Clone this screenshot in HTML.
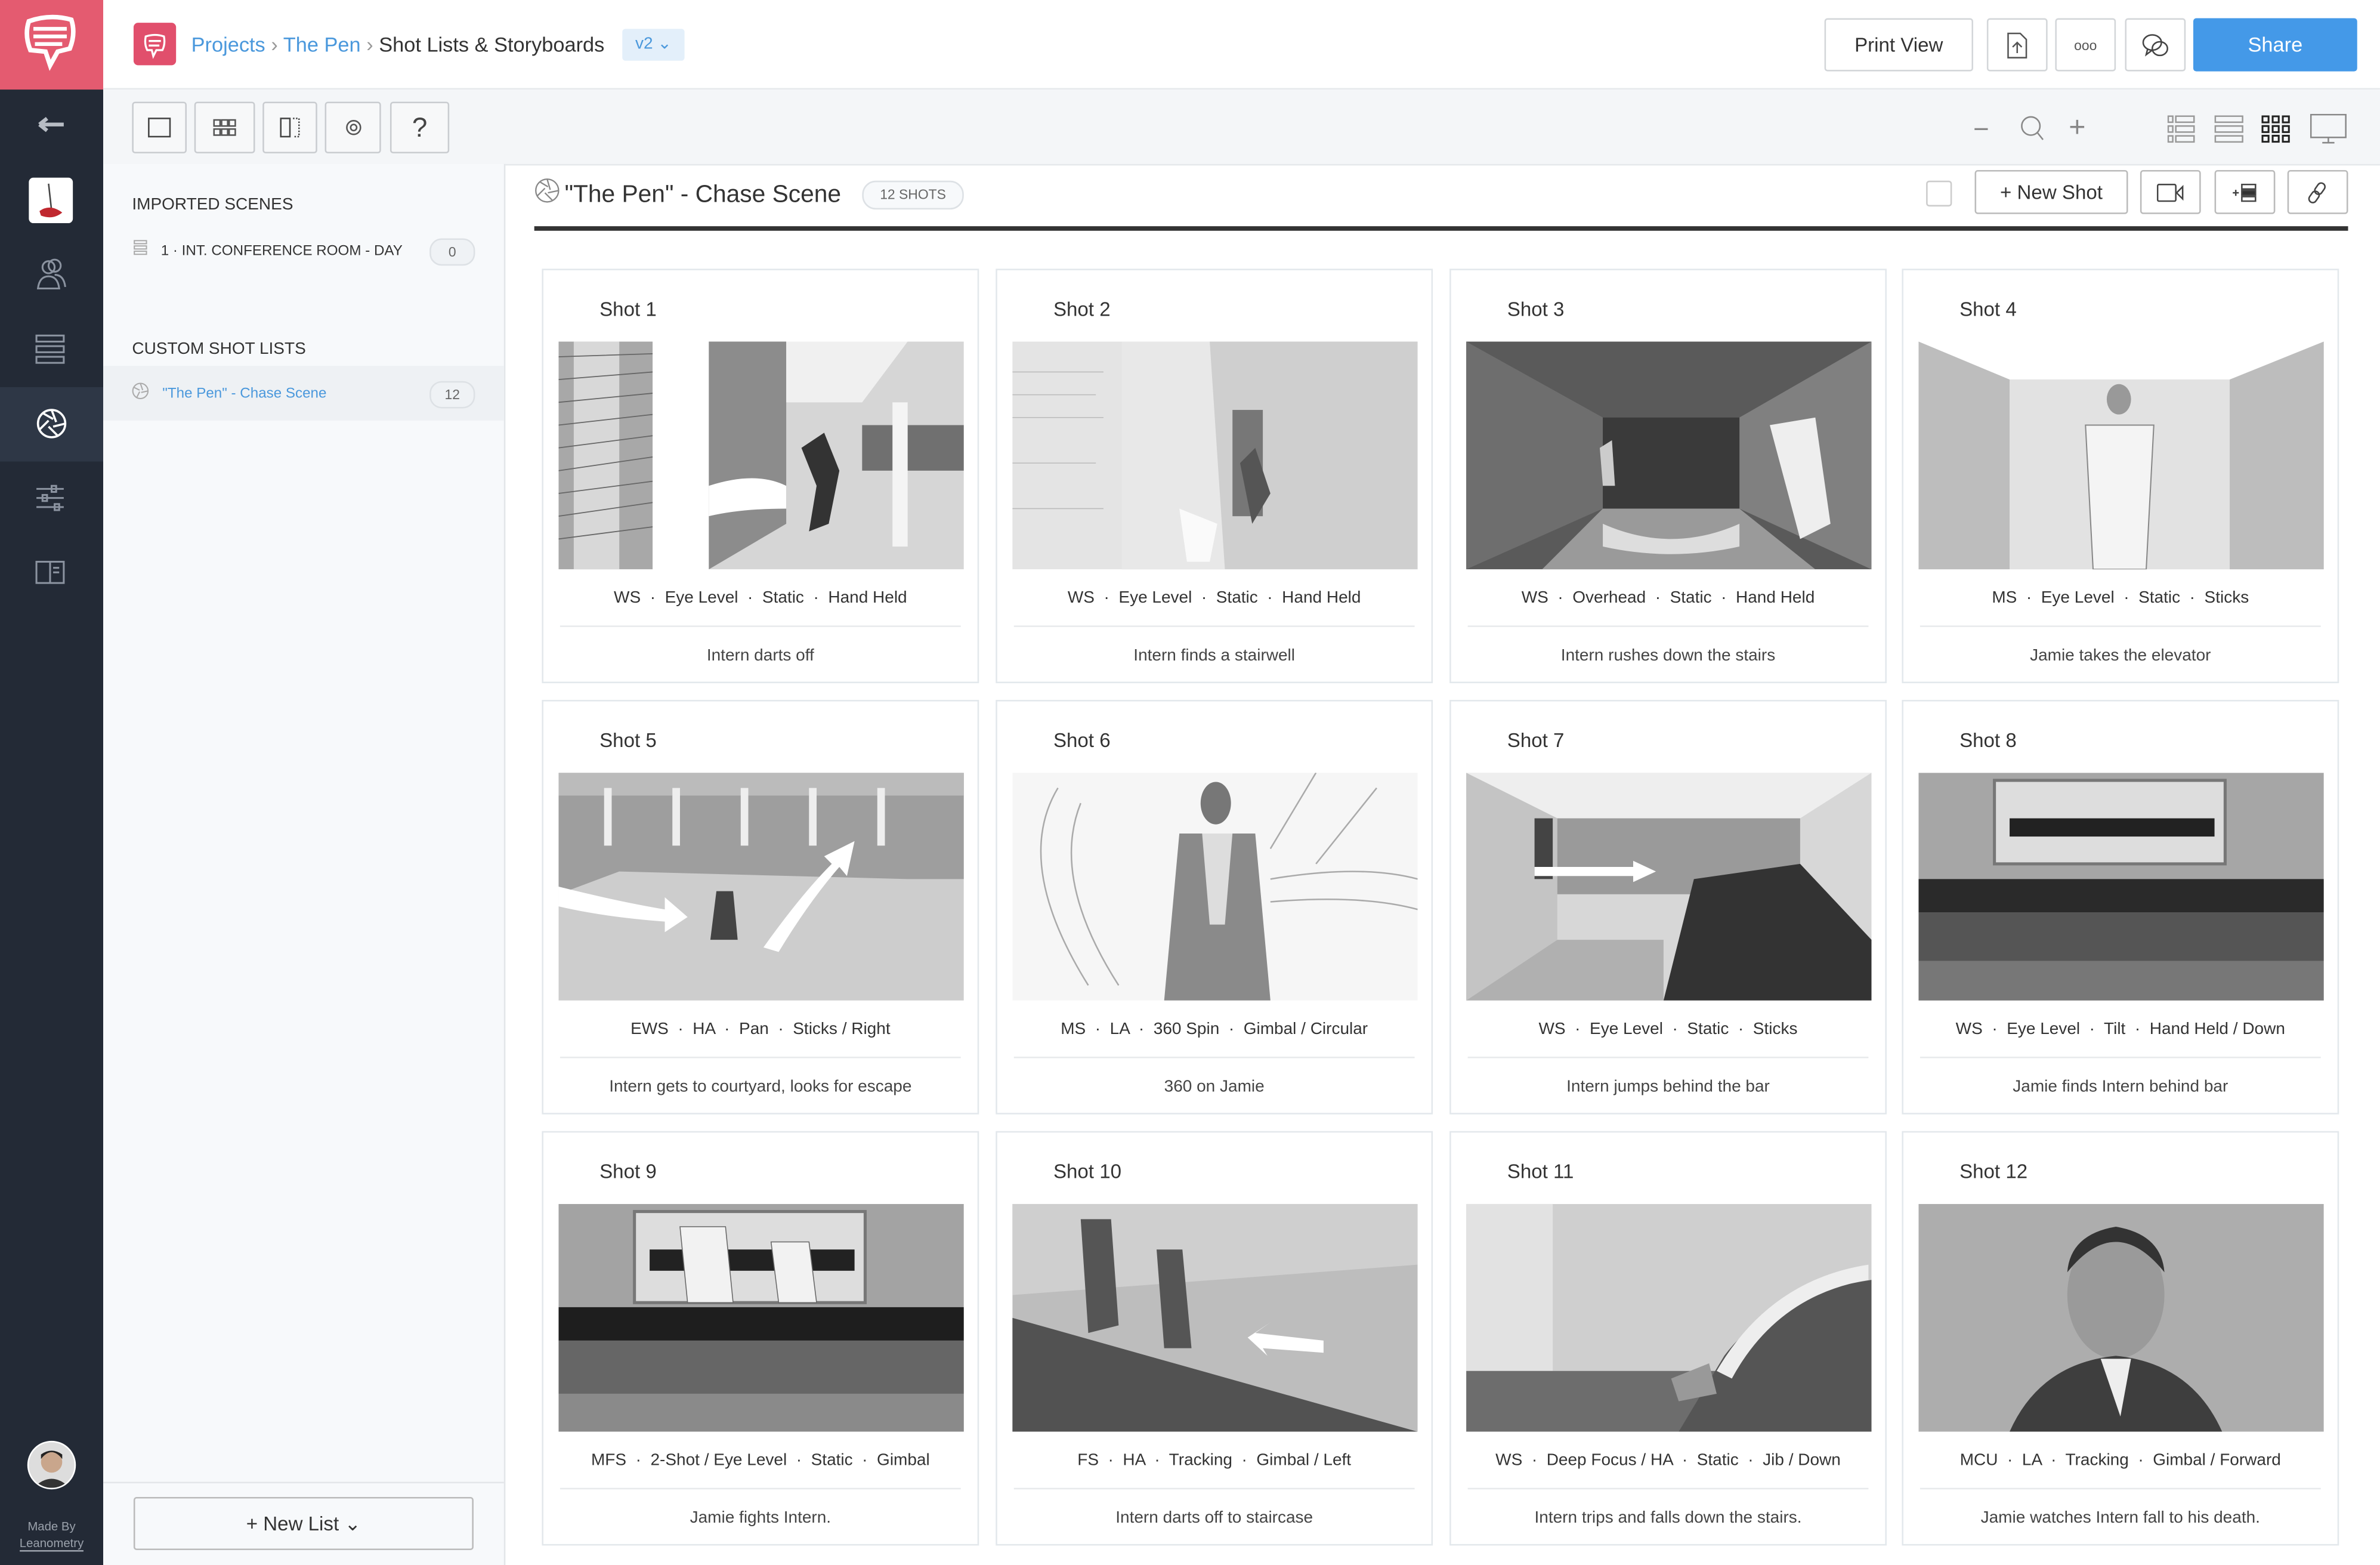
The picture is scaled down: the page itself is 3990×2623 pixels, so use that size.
<!DOCTYPE html>
<html><head><meta charset="utf-8"><style>
html,body{margin:0;padding:0;width:3990px;height:2623px;overflow:hidden;background:#fff}
#w{position:absolute;left:0;top:0;width:1568px;height:1031px;transform:scale(2.5446);transform-origin:0 0;font-family:"Liberation Sans",sans-serif;color:#333}
.a{position:absolute}
.sb{left:0;top:0;width:68px;height:1031px;background:#232a36}
.logo{left:0;top:0;width:68px;height:59px;background:#e45b70}
.hdr{left:68px;top:0;width:1500px;height:58px;background:#fff;border-bottom:1px solid #e6e9ec}
.tb{left:68px;top:59px;width:1500px;height:49px;background:#f4f6f8;border-bottom:1px solid #e6e9ec}
.lp{left:68px;top:108px;width:264px;height:923px;background:#f7f9fb;border-right:1px solid #e3e6e9}
.btn{position:absolute;background:#fff;border:1px solid #d3d6d9;border-radius:2px;box-sizing:border-box;display:flex;align-items:center;justify-content:center}
.tbtn{position:absolute;top:67px;height:34px;background:#f7f8f9;border:1px solid #c9ccd0;border-radius:2px;box-sizing:border-box;display:flex;align-items:center;justify-content:center}
.card{position:absolute;width:288px;height:273px;background:#fff;border:1px solid #e3e8ec;box-sizing:border-box}
.card .t{position:absolute;left:37px;top:18px;font-size:13px;color:#333}
.card svg{position:absolute;left:10px;top:47px}
.card .m{position:absolute;left:0;width:100%;top:210px;text-align:center;font-size:11px;color:#333;white-space:nowrap}
.card .l{position:absolute;left:11px;right:11px;top:234px;border-top:1px solid #e8eaec}
.card .c{position:absolute;left:0;width:100%;top:248px;text-align:center;font-size:11px;color:#444;white-space:nowrap}
.pill{position:absolute;border:1px solid #dde1e5;border-radius:9px;background:#eff2f5;font-size:9px;color:#666;text-align:center}
</style></head><body><div id="w">
<div class="a sb"></div>
<div class="a logo"><svg width="68" height="59"><path d="M19 14 Q33 9 47 13 Q50 22 46 32 L38 34 L33 43 L30 34 L20 33 Q16 23 19 14Z" fill="none" stroke="#fff" stroke-width="3"/><path d="M22 19 H44 M22 24 H44 M23 29 H41" stroke="#fff" stroke-width="2.5"/></svg></div>
<svg class="a" style="left:24px;top:76px" width="20" height="12"><path d="M2 6 H18 M2 6 L7 2 M2 6 L7 10" stroke="#b7bcc4" stroke-width="2.5" fill="none"/></svg>
<div class="a" style="left:19px;top:117px;width:29px;height:30px;background:#fff;border-radius:3px"><svg width="29" height="30"><path d="M13 4 L15 22" stroke="#444"/><path d="M7 22 Q14 17 22 23 Q16 28 8 25Z" fill="#c0282f"/></svg></div>
<svg class="a" style="left:24px;top:168px" width="20" height="24" fill="none" stroke="#8b93a0" stroke-width="1.2"><circle cx="8" cy="8" r="4"/><circle cx="12" cy="7" r="4"/><path d="M1 22 Q2 14 8 14 Q14 14 15 22Z M12 13 Q18 13 19 21"/></svg>
<svg class="a" style="left:23px;top:220px" width="20" height="20" fill="none" stroke="#8b93a0" stroke-width="1.2"><rect x="1" y="1" width="18" height="4"/><rect x="1" y="8" width="18" height="4"/><rect x="1" y="15" width="18" height="4"/></svg>
<div class="a" style="left:0;top:255px;width:68px;height:49px;background:#2e3746"></div>
<svg class="a" style="left:23px;top:268px" width="22" height="22" fill="none" stroke="#fff" stroke-width="1.4"><circle cx="11" cy="11" r="9"/><path d="M11 2 L14 10 M20 11 L12 13 M15 19 L9 13 M3 15 L9 9 M5 4 L12 8"/></svg>
<svg class="a" style="left:23px;top:318px" width="20" height="20" fill="none" stroke="#8b93a0" stroke-width="1.2"><path d="M1 4 H19 M1 10 H19 M1 16 H19"/><rect x="11" y="2" width="3" height="4"/><rect x="5" y="8" width="3" height="4"/><rect x="13" y="14" width="3" height="4"/></svg>
<svg class="a" style="left:23px;top:368px" width="20" height="18" fill="none" stroke="#8b93a0" stroke-width="1.2"><rect x="1" y="2" width="18" height="14"/><path d="M10 2 V16 M12 6 H16 M12 9 H16"/></svg>
<div class="a" style="left:18px;top:949px;width:30px;height:30px;border-radius:50%;background:#ddd;border:1px solid #fff;overflow:hidden"><svg width="30" height="30"><circle cx="15" cy="13" r="7" fill="#c9a68c"/><path d="M8 11 Q15 2 22 11 L22 8 Q15 3 8 8Z" fill="#222"/><path d="M3 30 Q15 18 27 30Z" fill="#333"/></svg></div>
<div class="a" style="left:0;top:1000px;width:68px;text-align:center;font-size:8px;color:#9aa1ab;line-height:11px">Made By<br><span style="border-bottom:1px solid #9aa1ab">Leanometry</span></div>

<div class="a hdr"></div>
<div class="a" style="left:88px;top:15px;width:28px;height:28px;background:#e14f6c;border-radius:3px"><svg width="28" height="28" fill="none" stroke="#fff" stroke-width="1.3"><path d="M8 9 Q14 7 20 9 Q21 14 19 18 L15 18 L13 22 L12 18 L9 18 Q7 14 8 9Z M10 12 H18 M10 15 H17"/></svg></div>
<div class="a" style="left:126px;top:22px;font-size:13.5px;white-space:nowrap"><span style="color:#4a98dc">Projects</span> <span style="color:#999">&#x203A;</span> <span style="color:#4a98dc">The Pen</span> <span style="color:#999">&#x203A;</span> <span style="color:#333">Shot Lists &amp; Storyboards</span></div>
<div class="a" style="left:410px;top:19px;width:41px;height:21px;background:#e3effa;border-radius:2px;font-size:11px;color:#4a98dc;line-height:21px;text-align:center">v2 &#x2304;</div>
<div class="btn" style="left:1202px;top:12px;width:98px;height:35px;font-size:13px">Print View</div>
<div class="btn" style="left:1309px;top:12px;width:40px;height:35px"><svg width="14" height="18" fill="none" stroke="#555"><path d="M1 1 H9 L13 5 V17 H1Z M7 14 V7 M4 10 L7 7 L10 10"/></svg></div>
<div class="btn" style="left:1354px;top:12px;width:40px;height:35px;font-size:9px;color:#555">ooo</div>
<div class="btn" style="left:1400px;top:12px;width:40px;height:35px"><svg width="18" height="18" fill="none" stroke="#444"><ellipse cx="7" cy="7" rx="6" ry="5"/><path d="M4 11 L3 15 L7 12"/><ellipse cx="12" cy="11" rx="5" ry="4.5"/></svg></div>
<div class="a" style="left:1445px;top:12px;width:108px;height:35px;background:#4499e8;border-radius:2px;color:#fff;font-size:13.5px;line-height:35px;text-align:center">Share</div>

<div class="a tb"></div>
<div class="tbtn" style="left:87px;width:36px"><svg width="16" height="14" fill="none" stroke="#444"><rect x="1" y="1" width="14" height="12"/></svg></div>
<div class="tbtn" style="left:128px;width:40px"><svg width="16" height="12" fill="none" stroke="#555"><rect x="1" y="1" width="4" height="4"/><rect x="6" y="1" width="4" height="4"/><rect x="11" y="1" width="4" height="4"/><rect x="1" y="7" width="4" height="4"/><rect x="6" y="7" width="4" height="4"/><rect x="11" y="7" width="4" height="4"/></svg></div>
<div class="tbtn" style="left:173px;width:36px"><svg width="14" height="14" fill="none" stroke="#444"><rect x="1" y="1" width="6" height="12"/><path d="M9 1 H13 V13 H9" stroke-dasharray="1 1"/></svg></div>
<div class="tbtn" style="left:214px;width:37px"><svg width="14" height="14" fill="none" stroke="#555"><circle cx="7" cy="7" r="4.5"/><circle cx="7" cy="7" r="2"/></svg></div>
<div class="tbtn" style="left:257px;width:39px;font-size:18px;color:#444">?</div>
<div class="a" style="left:1300px;top:75px;font-size:18px;color:#888">&#x2212;</div>
<svg class="a" style="left:1330px;top:76px" width="18" height="18" fill="none" stroke="#888"><circle cx="8" cy="7" r="6"/><path d="M12 11 L16 16"/></svg>
<div class="a" style="left:1363px;top:74px;font-size:19px;color:#888">+</div>
<svg class="a" style="left:1428px;top:76px" width="18" height="18" fill="none" stroke="#999"><rect x="0.5" y="0.5" width="3" height="4"/><rect x="5.5" y="0.5" width="12" height="4"/><rect x="0.5" y="7" width="3" height="4"/><rect x="5.5" y="7" width="12" height="4"/><rect x="0.5" y="13.5" width="3" height="4"/><rect x="5.5" y="13.5" width="12" height="4"/></svg>
<svg class="a" style="left:1459px;top:76px" width="19" height="18" fill="none" stroke="#999"><rect x="0.5" y="0.5" width="18" height="4"/><rect x="0.5" y="7" width="18" height="4"/><rect x="0.5" y="13.5" width="18" height="4"/></svg>
<svg class="a" style="left:1490px;top:76px" width="19" height="18" fill="none" stroke="#222" stroke-width="1.2"><rect x="0.6" y="0.6" width="4" height="4"/><rect x="7.3" y="0.6" width="4" height="4"/><rect x="14" y="0.6" width="4" height="4"/><rect x="0.6" y="7" width="4" height="4"/><rect x="7.3" y="7" width="4" height="4"/><rect x="14" y="7" width="4" height="4"/><rect x="0.6" y="13.4" width="4" height="4"/><rect x="7.3" y="13.4" width="4" height="4"/><rect x="14" y="13.4" width="4" height="4"/></svg>
<svg class="a" style="left:1522px;top:75px" width="24" height="20" fill="none" stroke="#888"><rect x="0.5" y="0.5" width="23" height="15"/><path d="M8 19 H16 M12 16 V19"/></svg>

<div class="a lp"></div>
<div class="a" style="left:87px;top:129px;font-size:11px;color:#333">IMPORTED SCENES</div>
<svg class="a" style="left:88px;top:158px" width="9" height="10" fill="none" stroke="#aaa" stroke-width=".8"><rect x="0.5" y="0.5" width="8" height="2"/><rect x="0.5" y="4" width="8" height="2"/><rect x="0.5" y="7.5" width="8" height="2"/></svg>
<div class="a" style="left:106px;top:160px;font-size:9.5px;color:#333">1 · INT. CONFERENCE ROOM - DAY</div>
<div class="pill" style="left:283px;top:157px;width:28px;height:16px;line-height:16px;border-radius:8px">0</div>
<div class="a" style="left:87px;top:224px;font-size:11px;color:#333">CUSTOM SHOT LISTS</div>
<div class="a" style="left:68px;top:241px;width:264px;height:36px;background:#eef1f4"></div>
<svg class="a" style="left:87px;top:252px" width="11" height="11" fill="none" stroke="#aaa" stroke-width=".8"><circle cx="5.5" cy="5.5" r="5"/><path d="M5.5 .5 L7 5 M10.5 5.5 L6 6.5 M3 10 L5 6 M1 3 L5 5"/></svg>
<div class="a" style="left:107px;top:254px;font-size:9.5px;color:#4a98dc">"The Pen" - Chase Scene</div>
<div class="pill" style="left:283px;top:251px;width:28px;height:16px;line-height:16px;border-radius:8px">12</div>
<div class="a" style="left:68px;top:976px;width:264px;border-top:1px solid #e3e6e9"></div>
<div class="btn" style="left:88px;top:986px;width:224px;height:35px;font-size:13px;background:#f7f9fb;border-color:#bbb">+ New List &#x2304;</div>

<svg class="a" style="left:352px;top:117px" width="17" height="17" fill="none" stroke="#888" stroke-width=".9"><circle cx="8.5" cy="8.5" r="7.5"/><path d="M8.5 1 L10.5 8 M16 8.5 L9 10 M12 15 L7 10 M2 12 L7 7 M4 3 L9 6"/></svg>
<div class="a" style="left:372px;top:120px;font-size:16px;color:#333">"The Pen" - Chase Scene</div>
<div class="pill" style="left:568px;top:119px;width:65px;height:17px;line-height:17px;background:#f7f9fb">12 SHOTS</div>
<div class="a" style="left:1269px;top:119px;width:17px;height:17px;border:1px solid #ccc;border-radius:2px;box-sizing:border-box"></div>
<div class="btn" style="left:1301px;top:112px;width:101px;height:29px;font-size:13px;border-color:#bbb">+&nbsp;New Shot</div>
<div class="btn" style="left:1410px;top:112px;width:40px;height:29px;border-color:#bbb"><svg width="18" height="12" fill="none" stroke="#444"><rect x=".5" y=".5" width="12" height="11" rx="1"/><path d="M13 6 L17 2 V10Z"/></svg></div>
<div class="btn" style="left:1459px;top:112px;width:40px;height:29px;border-color:#bbb"><svg width="16" height="12" fill="none" stroke="#444"><path d="M0 6 H4 M2 4 V8"/><rect x="6" y=".5" width="9" height="3"/><rect x="6" y="4.5" width="9" height="3" fill="#333"/><rect x="6" y="8.5" width="9" height="3"/></svg></div>
<div class="btn" style="left:1507px;top:112px;width:40px;height:29px;border-color:#bbb"><svg width="14" height="16" fill="none" stroke="#444"><rect x="6" y="1" width="5" height="8" rx="2.5" transform="rotate(35 8 5)"/><rect x="2" y="7" width="5" height="8" rx="2.5" transform="rotate(35 5 11)"/></svg></div>
<div class="a" style="left:352px;top:149px;width:1195px;height:3px;background:#333"></div>

<!-- Row 1 -->
<div class="card" style="left:357px;top:177px"><div class="t">Shot 1</div>
<svg width="267" height="150"><rect width="62" height="150" fill="#a8a8a8"/><rect x="10" width="30" height="150" fill="#d8d8d8"/><g stroke="#666" stroke-width=".7"><path d="M0 10 L62 8 M0 25 L62 20 M0 40 L62 34 M0 55 L62 48 M0 70 L62 62 M0 85 L62 76 M0 100 L62 92 M0 115 L62 106 M0 130 L62 122"/></g><rect x="62" width="37" height="150" fill="#fff"/><rect x="99" width="168" height="150" fill="#d6d6d6"/><path d="M99 0 H150 V120 L99 150Z" fill="#8c8c8c"/><path d="M150 0 H230 L200 40 L150 40Z" fill="#f0f0f0"/><rect x="200" y="55" width="67" height="30" fill="#707070"/><path d="M99 95 Q130 85 150 95 L150 110 Q120 110 99 115Z" fill="#fff"/><path d="M160 70 L175 60 L185 85 L178 120 L165 125 L170 95Z" fill="#333"/><rect x="220" y="40" width="10" height="95" fill="#f4f4f4"/></svg>
<div class="m">WS &nbsp;·&nbsp; Eye Level &nbsp;·&nbsp; Static &nbsp;·&nbsp; Hand Held</div><div class="l"></div><div class="c">Intern darts off</div></div>

<div class="card" style="left:656px;top:177px"><div class="t">Shot 2</div>
<svg width="267" height="150"><rect width="267" height="150" fill="#e4e4e4"/><path d="M72 0 H267 V150 H72Z" fill="#cfcfcf"/><path d="M72 0 L130 0 L140 150 L72 150Z" fill="#e8e8e8"/><rect x="145" y="45" width="20" height="70" fill="#777"/><path d="M150 80 L160 70 L170 100 L158 120Z" fill="#555"/><path d="M110 110 L135 120 L130 145 L115 145Z" fill="#fafafa"/><g stroke="#bbb" stroke-width=".6"><path d="M0 20 H60 M0 35 H55 M0 50 H60 M0 80 H55 M0 110 H60"/></g></svg>
<div class="m">WS &nbsp;·&nbsp; Eye Level &nbsp;·&nbsp; Static &nbsp;·&nbsp; Hand Held</div><div class="l"></div><div class="c">Intern finds a stairwell</div></div>

<div class="card" style="left:955px;top:177px"><div class="t">Shot 3</div>
<svg width="267" height="150"><rect width="267" height="150" fill="#5a5a5a"/><path d="M0 0 L90 50 L90 110 L0 150Z" fill="#6e6e6e"/><path d="M267 0 L180 50 L180 110 L267 150Z" fill="#808080"/><rect x="90" y="50" width="90" height="60" fill="#3a3a3a"/><path d="M50 150 L90 110 L180 110 L230 150Z" fill="#9a9a9a"/><path d="M200 55 L230 50 L240 120 L220 130Z" fill="#eee"/><path d="M90 120 Q135 140 180 120 L180 135 Q135 145 90 135Z" fill="#ddd"/><path d="M88 70 L96 65 L98 95 L90 95Z" fill="#ccc"/></svg>
<div class="m">WS &nbsp;·&nbsp; Overhead &nbsp;·&nbsp; Static &nbsp;·&nbsp; Hand Held</div><div class="l"></div><div class="c">Intern rushes down the stairs</div></div>

<div class="card" style="left:1253px;top:177px"><div class="t">Shot 4</div>
<svg width="267" height="150"><rect width="267" height="150" fill="#d3d3d3"/><path d="M0 0 H267 L205 25 H60Z" fill="#fff"/><path d="M0 0 L60 25 V150 H0Z M267 0 L205 25 V150 H267Z" fill="#bdbdbd"/><rect x="60" y="25" width="145" height="125" fill="#e2e2e2"/><ellipse cx="132" cy="38" rx="8" ry="10" fill="#999"/><path d="M110 55 L155 55 L150 150 L115 150Z" fill="#f4f4f4" stroke="#888" stroke-width=".8"/></svg>
<div class="m">MS &nbsp;·&nbsp; Eye Level &nbsp;·&nbsp; Static &nbsp;·&nbsp; Sticks</div><div class="l"></div><div class="c">Jamie takes the elevator</div></div>

<!-- Row 2 -->
<div class="card" style="left:357px;top:461px"><div class="t">Shot 5</div>
<svg width="267" height="150"><rect width="267" height="150" fill="#cdcdcd"/><path d="M0 0 H267 V70 H230 L40 65 L0 80Z" fill="#9e9e9e"/><path d="M0 0 H267 V15 H0Z" fill="#bbb"/><g fill="#eee"><rect x="30" y="10" width="5" height="38"/><rect x="75" y="10" width="5" height="38"/><rect x="120" y="10" width="5" height="38"/><rect x="165" y="10" width="5" height="38"/><rect x="210" y="10" width="5" height="38"/></g><path d="M0 75 Q40 85 70 90 L70 82 L85 95 L70 105 L70 98 Q30 95 0 88Z" fill="#fff"/><path d="M135 115 Q160 80 180 60 L175 55 L195 45 L190 68 L185 62 Q165 85 145 118Z" fill="#fff"/><path d="M104 78 L115 78 L118 110 L100 110Z" fill="#444"/></svg>
<div class="m">EWS &nbsp;·&nbsp; HA &nbsp;·&nbsp; Pan &nbsp;·&nbsp; Sticks / Right</div><div class="l"></div><div class="c">Intern gets to courtyard, looks for escape</div></div>

<div class="card" style="left:656px;top:461px"><div class="t">Shot 6</div>
<svg width="267" height="150"><rect width="267" height="150" fill="#f6f6f6"/><g fill="none" stroke="#aaa"><path d="M30 10 Q0 60 50 140 M45 20 Q25 70 70 140 M170 70 Q230 60 267 70 M170 85 Q230 80 267 90 M200 0 L170 50 M240 10 L200 60"/></g><path d="M110 40 L160 40 L170 150 L100 150Z" fill="#8a8a8a"/><ellipse cx="134" cy="20" rx="10" ry="14" fill="#777"/><path d="M125 40 L145 40 L140 100 L130 100Z" fill="#ddd"/></svg>
<div class="m">MS &nbsp;·&nbsp; LA &nbsp;·&nbsp; 360 Spin &nbsp;·&nbsp; Gimbal / Circular</div><div class="l"></div><div class="c">360 on Jamie</div></div>

<div class="card" style="left:955px;top:461px"><div class="t">Shot 7</div>
<svg width="267" height="150"><rect width="267" height="150" fill="#d7d7d7"/><path d="M0 0 H267 L220 30 H60Z" fill="#eee"/><path d="M0 0 L60 30 L60 110 L0 150Z" fill="#c4c4c4"/><rect x="60" y="30" width="160" height="50" fill="#9a9a9a"/><rect x="45" y="30" width="12" height="40" fill="#444"/><path d="M130 150 L150 70 L220 60 L267 110 L267 150Z" fill="#333"/><path d="M0 150 L60 110 L130 110 L130 150Z" fill="#b0b0b0"/><path d="M45 62 H110 V58 L125 65 L110 72 V68 H45Z" fill="#fff"/></svg>
<div class="m">WS &nbsp;·&nbsp; Eye Level &nbsp;·&nbsp; Static &nbsp;·&nbsp; Sticks</div><div class="l"></div><div class="c">Intern jumps behind the bar</div></div>

<div class="card" style="left:1253px;top:461px"><div class="t">Shot 8</div>
<svg width="267" height="150"><rect width="267" height="150" fill="#a6a6a6"/><rect x="50" y="5" width="152" height="55" fill="#ddd" stroke="#777" stroke-width="2"/><rect x="60" y="30" width="135" height="12" fill="#222"/><rect x="0" y="70" width="267" height="22" fill="#2a2a2a"/><rect x="0" y="92" width="267" height="32" fill="#555"/><rect x="0" y="124" width="267" height="26" fill="#777"/></svg>
<div class="m">WS &nbsp;·&nbsp; Eye Level &nbsp;·&nbsp; Tilt &nbsp;·&nbsp; Hand Held / Down</div><div class="l"></div><div class="c">Jamie finds Intern behind bar</div></div>

<!-- Row 3 -->
<div class="card" style="left:357px;top:745px"><div class="t">Shot 9</div>
<svg width="267" height="150"><rect width="267" height="150" fill="#a3a3a3"/><rect x="50" y="5" width="152" height="60" fill="#ddd" stroke="#777" stroke-width="2"/><rect x="60" y="30" width="135" height="14" fill="#222"/><path d="M80 15 L110 15 L115 65 L85 65Z M140 25 L165 25 L170 65 L145 65Z" fill="#f2f2f2" stroke="#666" stroke-width=".6"/><rect x="0" y="68" width="267" height="22" fill="#1e1e1e"/><rect x="0" y="90" width="267" height="35" fill="#666"/><rect x="0" y="125" width="267" height="25" fill="#8a8a8a"/></svg>
<div class="m">MFS &nbsp;·&nbsp; 2-Shot / Eye Level &nbsp;·&nbsp; Static &nbsp;·&nbsp; Gimbal</div><div class="l"></div><div class="c">Jamie fights Intern.</div></div>

<div class="card" style="left:656px;top:745px"><div class="t">Shot 10</div>
<svg width="267" height="150"><rect width="267" height="150" fill="#bdbdbd"/><path d="M0 0 H267 V40 L0 60Z" fill="#cfcfcf"/><path d="M0 75 L267 150 H0Z" fill="#525252"/><path d="M45 10 L65 10 L70 80 L50 85Z M95 30 L112 30 L118 95 L100 95Z" fill="#555"/><path d="M160 85 L205 90 L205 98 L165 95 L168 100 L155 88 L170 78Z" fill="#fff"/></svg>
<div class="m">FS &nbsp;·&nbsp; HA &nbsp;·&nbsp; Tracking &nbsp;·&nbsp; Gimbal / Left</div><div class="l"></div><div class="c">Intern darts off to staircase</div></div>

<div class="card" style="left:955px;top:745px"><div class="t">Shot 11</div>
<svg width="267" height="150"><rect width="267" height="150" fill="#cfcfcf"/><rect width="57" height="110" fill="#e2e2e2"/><rect x="0" y="110" width="267" height="40" fill="#6d6d6d"/><path d="M140 150 L170 100 Q200 60 267 50 V150Z" fill="#555"/><path d="M165 110 Q200 50 265 40 L265 50 Q205 60 175 115Z" fill="#eee"/><path d="M135 115 L160 105 L165 125 L140 130Z" fill="#999"/></svg>
<div class="m">WS &nbsp;·&nbsp; Deep Focus / HA &nbsp;·&nbsp; Static &nbsp;·&nbsp; Jib / Down</div><div class="l"></div><div class="c">Intern trips and falls down the stairs.</div></div>

<div class="card" style="left:1253px;top:745px"><div class="t">Shot 12</div>
<svg width="267" height="150"><rect width="267" height="150" fill="#adadad"/><ellipse cx="130" cy="60" rx="32" ry="42" fill="#9a9a9a"/><path d="M98 45 Q130 5 162 45 Q160 20 130 15 Q100 20 98 45Z" fill="#333"/><path d="M60 150 Q80 105 130 100 Q180 105 200 150Z" fill="#3e3e3e"/><path d="M120 102 L140 102 L133 140Z" fill="#eee"/></svg>
<div class="m">MCU &nbsp;·&nbsp; LA &nbsp;·&nbsp; Tracking &nbsp;·&nbsp; Gimbal / Forward</div><div class="l"></div><div class="c">Jamie watches Intern fall to his death.</div></div>
</div></body></html>
